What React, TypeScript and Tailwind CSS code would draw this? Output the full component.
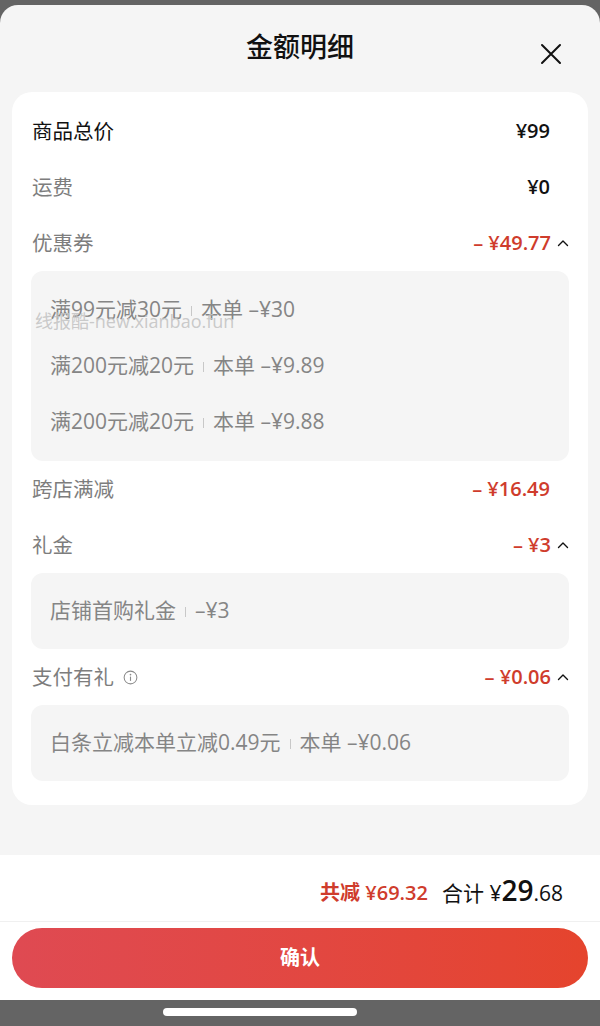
import React from 'react';

const font = { fontFamily: '"Open Sans", "Noto Sans CJK SC", sans-serif' };

function Chevron() {
  return (
    <svg width="12" height="8" viewBox="0 0 12 8" className="ml-[6px]" fill="none">
      <path d="M1.5 6.5 L6 2 L10.5 6.5" stroke="#111" strokeWidth="1.4" strokeLinecap="round" strokeLinejoin="round" />
    </svg>
  );
}

function Row({ label, value, dark, red, open, info }: { label: string; value: string; dark?: boolean; red?: boolean; open?: boolean; info?: boolean }) {
  return (
    <div className="flex h-[56px] items-center justify-between">
      <div className={`flex items-center text-[20.5px] ${dark ? 'text-[#111]' : 'text-[#7d7d7d]'}`}>
        {label}
        {info && (
          <svg width="15" height="15" viewBox="0 0 16 16" className="ml-[9px]" fill="none">
            <circle cx="8" cy="8" r="6.8" stroke="#8a8a8a" strokeWidth="1.1" />
            <circle cx="8" cy="4.9" r="0.9" fill="#8a8a8a" />
            <path d="M8 7 V11.6" stroke="#8a8a8a" strokeWidth="1.2" />
          </svg>
        )}
      </div>
      <div className={`flex items-center ${open ? '' : 'mr-[19px]'}`}>
        <span className={`text-[20px] font-semibold ${red ? 'text-[#cf3c2c]' : 'text-[#111]'}`}>{value}</span>
        {open && <Chevron />}
      </div>
    </div>
  );
}

function SubBox({ items, py }: { items: [string, string][]; py: string }) {
  return (
    <div className={`rounded-[12px] bg-[#f5f5f5] px-[19px] ${py}`}>
      {items.map(([a, b], i) => (
        <div key={i} className="flex h-[56px] items-center text-[21px] text-[#858585]">
          <span>{a}</span>
          <span className="mx-[9px] mt-[2px] h-[10px] w-px bg-[#c8c8c8]" />
          <span>{b}</span>
        </div>
      ))}
    </div>
  );
}

export default function App() {
  return (
    <div className="flex h-[1026px] w-[600px] flex-col bg-[#646464] pt-[5px]" style={font}>
      <div className="flex flex-1 flex-col overflow-hidden rounded-t-[18px] bg-[#f5f5f5]">
        <div className="relative flex h-[87px] items-center justify-center pb-[2px]">
          <h1 className="text-[27px] font-medium text-[#111]">金额明细</h1>
          <svg width="22" height="22" viewBox="0 0 22 22" className="absolute right-[38px] top-[38px]" fill="none">
            <path d="M2 2 L20 20 M20 2 L2 20" stroke="#111" strokeWidth="2" strokeLinecap="round" />
          </svg>
        </div>

        <div className="relative mx-[12px] rounded-[20px] bg-white px-[19px] pb-[24px] pt-[11px]">
          <div className="pl-[1px]">
            <Row label="商品总价" value="¥99" dark />
            <Row label="运费" value="¥0" />
            <Row label="优惠券" value="– ¥49.77" red open />
          </div>
          <div className="relative">
            <SubBox
              py="py-[11px]"
              items={[
                ['满99元减30元', '本单 –¥30'],
                ['满200元减20元', '本单 –¥9.89'],
                ['满200元减20元', '本单 –¥9.88'],
              ]}
            />
            <span className="pointer-events-none absolute left-[4px] top-[37px] text-[18px] text-[#c4c4c4]/90">线报酷-new.xianbao.fun</span>
          </div>
          <div className="pl-[1px]">
            <Row label="跨店满减" value="– ¥16.49" red />
            <Row label="礼金" value="– ¥3" red open />
          </div>
          <SubBox py="py-[10px]" items={[['店铺首购礼金', '–¥3']]} />
          <div className="pl-[1px]">
            <Row label="支付有礼" value="– ¥0.06" red open info />
          </div>
          <SubBox py="py-[10px]" items={[['白条立减本单立减0.49元', '本单 –¥0.06']]} />
        </div>

        <div className="flex-1" />

        <div className="bg-white">
          <div className="flex h-[66px] items-center justify-end pr-[37px] pt-[10px]">
            <span className="text-[20px] font-semibold text-[#cf3c2c]">共减 ¥69.32</span>
            <span className="ml-[14px] flex items-baseline text-[#111]">
              <span className="text-[21px]">合计 ¥</span>
              <span className="text-[28px] font-semibold leading-none">29</span>
              <span className="text-[21px]">.68</span>
            </span>
          </div>
          <div className="h-px bg-[#f0f0f0]" />
          <div className="px-[12px] pb-[12px] pt-[6px]">
            <button className="flex h-[60px] w-full items-center justify-center rounded-full bg-gradient-to-r from-[#df4a52] to-[#e5442d] text-[20px] font-semibold text-white">
              确认
            </button>
          </div>
        </div>
      </div>
      <div className="flex h-[26px] bg-[#646464] pl-[163px] pt-[8px]">
        <div className="h-[8px] w-[194px] rounded-full bg-white" />
      </div>
    </div>
  );
}
